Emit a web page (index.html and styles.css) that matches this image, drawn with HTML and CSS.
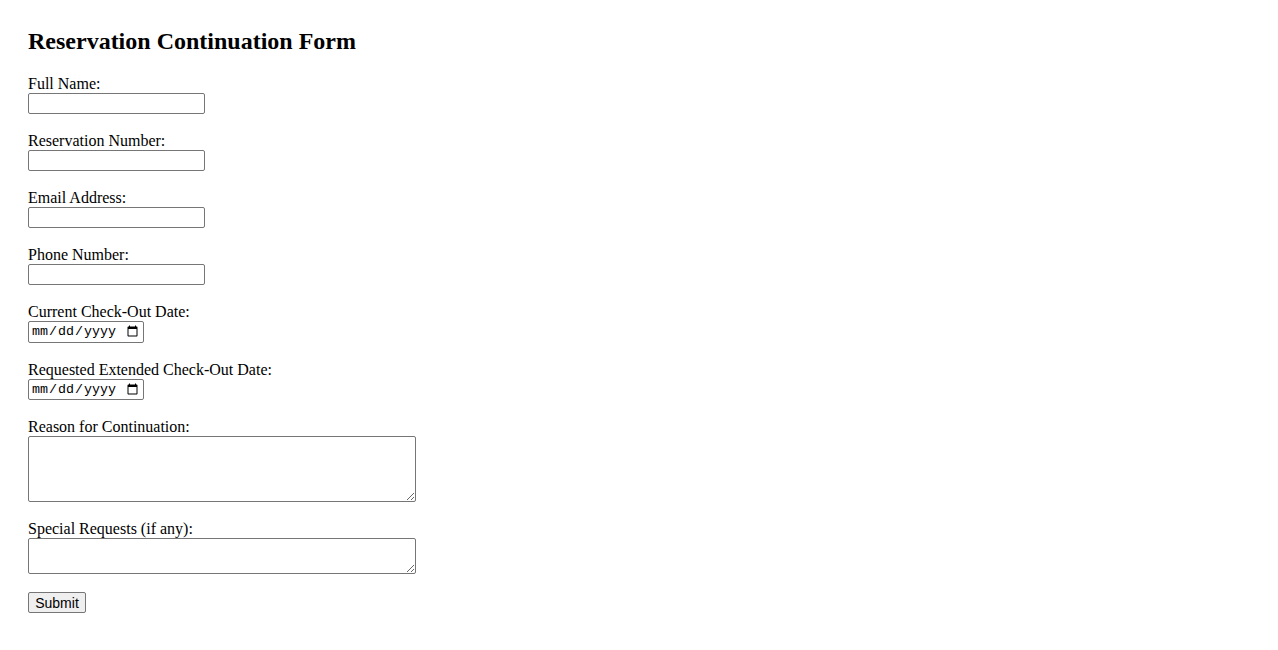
FILE: index.html
```html
<!DOCTYPE html>
<html lang="en">
<head>
<meta charset="utf-8">
<title>Reservation Continuation Form</title>
<link rel="stylesheet" href="styles.css">
</head>
<body>
<h2 class="title">Reservation Continuation Form</h2>
<form class="form">
<label class="label" for="fullName">Full Name:</label><br>
<input class="text-input" type="text" id="fullName"><br><br>
<label class="label" for="resNum">Reservation Number:</label><br>
<input class="text-input" type="text" id="resNum"><br><br>
<label class="label" for="email">Email Address:</label><br>
<input class="text-input" type="email" id="email"><br><br>
<label class="label" for="phone">Phone Number:</label><br>
<input class="text-input" type="tel" id="phone"><br><br>
<label class="label" for="curDate">Current Check-Out Date:</label><br>
<input class="date-input" type="date" id="curDate"><br><br>
<label class="label" for="extDate">Requested Extended Check-Out Date:</label><br>
<input class="date-input" type="date" id="extDate"><br><br>
<label class="label" for="reason">Reason for Continuation:</label><br>
<textarea class="area area-tall" id="reason"></textarea><br><br>
<label class="label" for="special">Special Requests (if any):</label><br>
<textarea class="area area-short" id="special"></textarea><br><br>
<button class="submit" type="submit">Submit</button>
</form>
</body>
</html>
```
FILE: styles.css
```css
body {
  margin: 8px;
  padding: 20px;
  font-family: "Liberation Serif", "Times New Roman", serif;
  font-size: 16px;
  color: #000;
  background: #fff;
}
.title {
  font-size: 24px;
  font-weight: bold;
  margin: 0 0 20px 0;
}
.text-input {
  box-sizing: border-box;
  width: 177px;
  height: 21px;
  font-family: "Liberation Sans", Arial, sans-serif;
  font-size: 13.333px;
  border: 1px solid #767676;
  border-radius: 2px;
  padding: 1px 2px;
  margin: 0;
}
.date-input {
  box-sizing: border-box;
  width: 116px;
  height: 21.5px;
  font-family: "Liberation Mono", monospace;
  font-size: 13.333px;
  border: 1px solid #767676;
  border-radius: 2px;
  padding: 1px 2px;
  margin: 0;
}
.area {
  box-sizing: border-box;
  width: 388px;
  font-family: "Liberation Mono", monospace;
  font-size: 13.333px;
  border: 1px solid #767676;
  border-radius: 2px;
  padding: 2px;
  margin: 0;
  vertical-align: bottom;
}
.area-tall { height: 66px; }
.area-short { height: 36px; }
.submit {
  box-sizing: border-box;
  width: 58px;
  height: 21px;
  font-family: "Liberation Sans", Arial, sans-serif;
  font-size: 14px;
  color: #000;
  background: #efefef;
  border: 1px solid #767676;
  border-radius: 2px;
  padding: 1px 6px;
  margin: 0;
}
```
